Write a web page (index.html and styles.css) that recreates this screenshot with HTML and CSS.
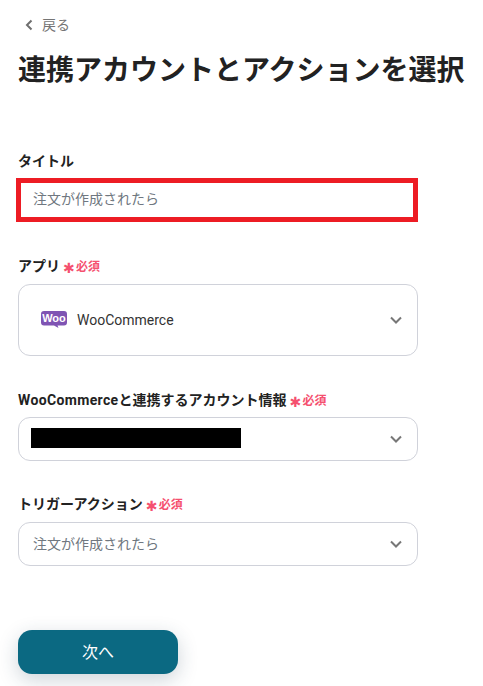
FILE: index.html
```html
<!DOCTYPE html>
<html lang="ja">
<head>
<meta charset="utf-8">
<title>連携アカウントとアクションを選択</title>
<link rel="stylesheet" href="styles.css">
</head>
<body>
<main class="page">
  <a class="back">
    <svg class="back-icon" viewBox="0 0 10 12" width="10" height="12"><path d="M7.500 1.500 3 6l4.500 4.500" fill="none" stroke="#6f6f6f" stroke-width="2"/></svg>
    <span>戻る</span>
  </a>
  <h1 class="title">連携アカウントとアクションを選択</h1>

  <section class="field field-title">
    <div class="label">タイトル</div>
    <div class="input-marked">注文が作成されたら</div>
  </section>

  <section class="field field-app">
    <div class="label">アプリ<span class="req"><span class="star">✱</span>必須</span></div>
    <div class="select select-app">
      <svg class="woo" viewBox="0 0 26 17" width="26" height="17">
        <path d="M3 0h20a3 3 0 0 1 3 3v8.500a3 3 0 0 1-3 3h-6.500l1 2.500-4.500-2.500H3a3 3 0 0 1-3-3V3a3 3 0 0 1 3-3z" fill="#7f54b3"/>
        <text x="13" y="11.200" text-anchor="middle" class="woo-text">Woo</text>
      </svg>
      <span class="app-name">WooCommerce</span>
      <svg class="chev" viewBox="0 0 12 8" width="12" height="8"><path d="M1 1.500 6 6.500l5-5" fill="none" stroke="#777" stroke-width="2"/></svg>
    </div>
  </section>

  <section class="field field-account">
    <div class="label"><span class="latin">WooCommerce</span>と連携するアカウント情報<span class="req"><span class="star">✱</span>必須</span></div>
    <div class="select select-account">
      <div class="redacted"></div>
      <svg class="chev" viewBox="0 0 12 8" width="12" height="8"><path d="M1 1.500 6 6.500l5-5" fill="none" stroke="#777" stroke-width="2"/></svg>
    </div>
  </section>

  <section class="field field-trigger">
    <div class="label">トリガーアクション<span class="req"><span class="star">✱</span>必須</span></div>
    <div class="select">
      <span class="value">注文が作成されたら</span>
      <svg class="chev" viewBox="0 0 12 8" width="12" height="8"><path d="M1 1.500 6 6.500l5-5" fill="none" stroke="#777" stroke-width="2"/></svg>
    </div>
  </section>

  <button class="next" type="button">次へ</button>
</main>
</body>
</html>
```
FILE: styles.css
```css
html, body {
  margin: 0;
  padding: 0;
  background: #fff;
}
body {
  width: 483px;
  height: 686px;
  overflow: hidden;
  font-family: Roboto, "Noto Sans CJK JP", sans-serif;
  color: #222;
}
.page {
  display: flex;
  flex-direction: column;
  align-items: flex-start;
  padding: 15px 0 0 18px;
}
.back {
  display: flex;
  align-items: center;
  gap: 8px;
  height: 20px;
  padding-left: 6px;
  font-size: 14px;
  line-height: 20px;
  color: #757575;
}
.title {
  margin: 16px 0 0;
  font-size: 28px;
  line-height: 40px;
  font-weight: 700;
  color: #222;
  white-space: nowrap;
}
.field {
  width: 400px;
  display: flex;
  flex-direction: column;
}
.field-title { margin-top: 60px; }
.field-app { margin-top: 34px; }
.field-account { margin-top: 34px; }
.field-trigger { margin-top: 33px; }
.label {
  display: flex;
  align-items: center;
  height: 20px;
  font-size: 14px;
  line-height: 20px;
  font-weight: 700;
  color: #222;
  white-space: nowrap;
}
.latin {
  letter-spacing: 0.36px;
}
.req {
  display: flex;
  align-items: center;
  margin-left: 3px;
  padding-top: 2px;
  font-size: 12px;
  font-weight: 700;
  color: #f5506f;
}
.star {
  display: inline-block;
  width: 11px;
  height: 14px;
  margin-right: 2px;
  font-size: 14px;
  line-height: 17px;
  font-weight: 400;
  text-align: center;
  font-family: "DejaVu Sans", sans-serif;
}
.input-marked {
  box-sizing: border-box;
  width: 402px;
  height: 44px;
  margin: 7px 0 0 -2px;
  padding-left: 12px;
  border: 5px solid #ed1c24;
  font-size: 14px;
  line-height: 33px;
  color: #6f7780;
}
.select {
  box-sizing: border-box;
  display: flex;
  align-items: center;
  height: 44px;
  margin-top: 8px;
  padding: 0 15px 0 14px;
  border: 1px solid #d0d2da;
  border-radius: 12px;
  background: #fff;
}
.select-account {
  margin-top: 7px;
}
.select-app {
  height: 72px;
  padding-left: 22px;
}
.woo {
  display: block;
  margin-right: 10px;
  margin-top: -2px;
}
.woo-text {
  font-family: "Liberation Sans", sans-serif;
  font-size: 11px;
  font-weight: 700;
  fill: #fff;
}
.app-name {
  font-size: 14px;
  color: #333;
}
.value {
  font-size: 14px;
  line-height: 20px;
  margin-top: -1px;
  color: #6f7780;
}
.redacted {
  width: 210px;
  height: 20px;
  margin: -2px 0 0 -2px;
  background: #000;
}
.chev {
  margin-left: auto;
}
.next {
  width: 160px;
  height: 44px;
  margin-top: 64px;
  padding-bottom: 4px;
  border: 0;
  border-radius: 14px;
  background: #0b6982;
  color: #fff;
  font-family: inherit;
  font-size: 16px;
  box-shadow: 0 6px 20px rgba(30, 60, 80, 0.22);
}
```
